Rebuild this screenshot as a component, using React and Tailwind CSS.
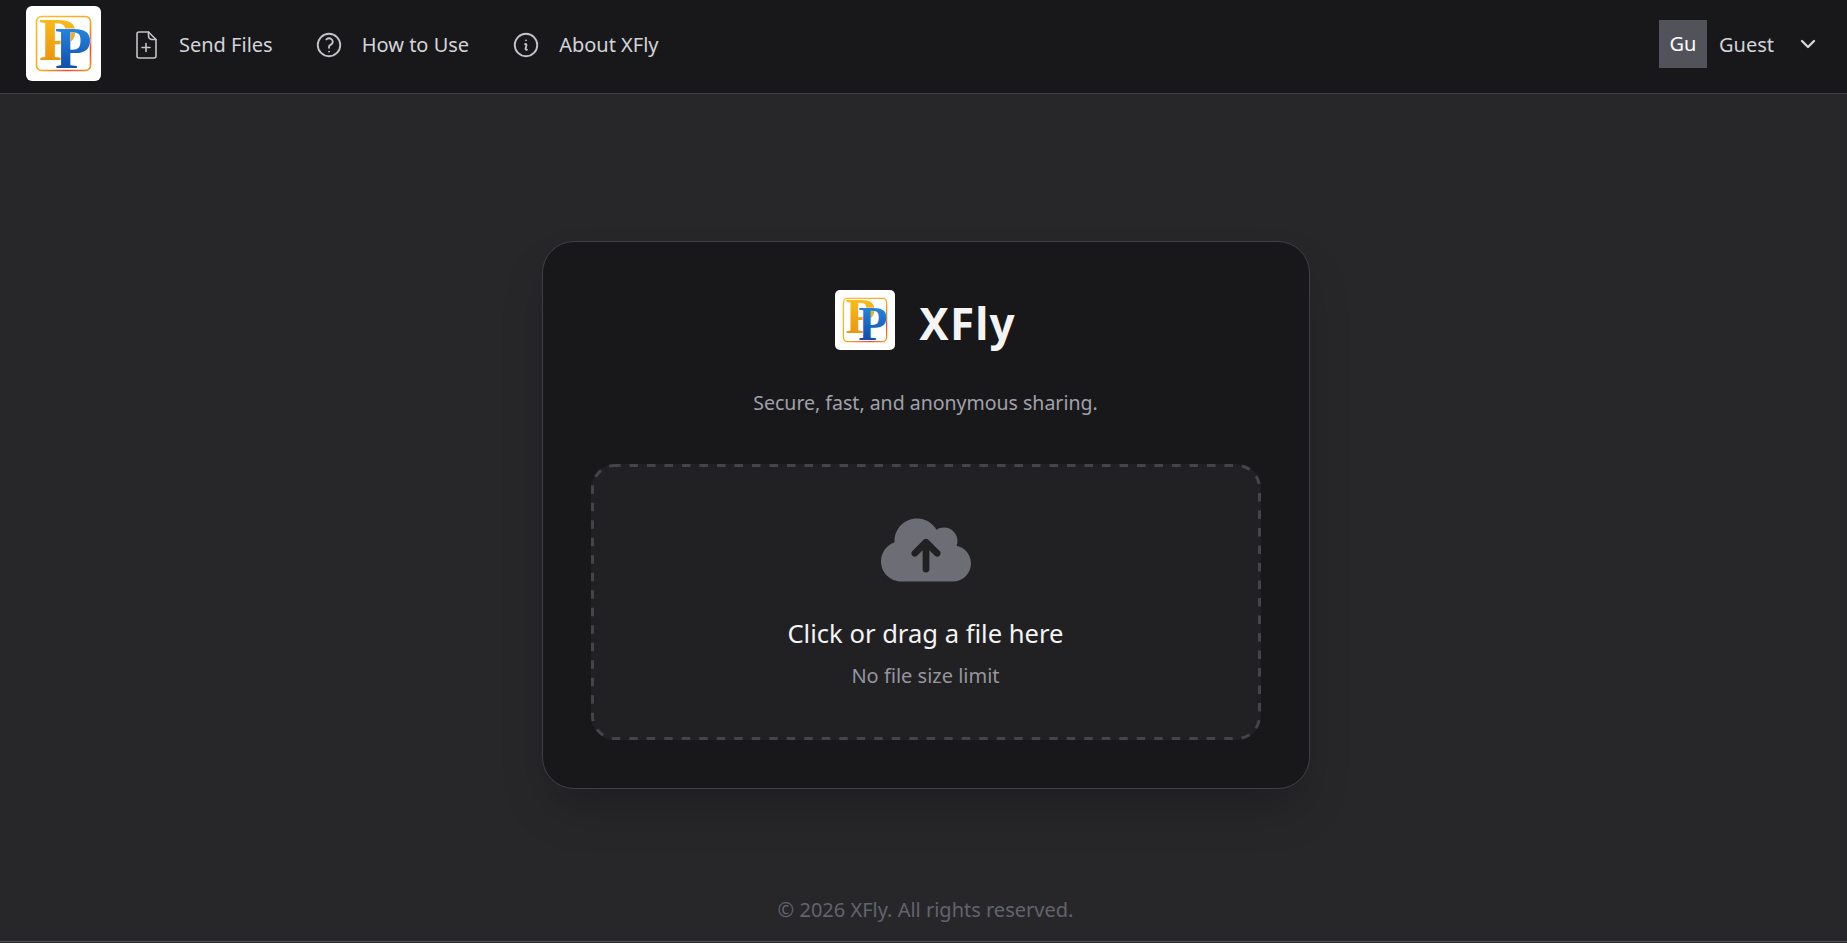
import React from 'react';
import { HiOutlineQuestionMarkCircle, HiOutlineInformationCircle } from 'react-icons/hi2';
import { FaCloudArrowUp } from 'react-icons/fa6';
import { ChevronDown } from 'lucide-react';

// logo: white tile with two overlapping serif P's in a gradient frame
const Logo = ({ id, className }) => (
  <div className={`bg-white shrink-0 ${className}`}>
    <svg viewBox="0 0 75 75" className="w-full h-full">
      <defs>
        <linearGradient id={`${id}-frame`} x1="0" y1="0" x2="1" y2="1">
          <stop offset="0" stopColor="#fbbf24" />
          <stop offset="0.55" stopColor="#f9a61a" />
          <stop offset="0.8" stopColor="#ef4b3a" />
          <stop offset="1" stopColor="#f59e0b" />
        </linearGradient>
        <linearGradient id={`${id}-gold`} x1="0" y1="0" x2="0" y2="1">
          <stop offset="0" stopColor="#fdc81e" />
          <stop offset="1" stopColor="#e8890c" />
        </linearGradient>
        <linearGradient id={`${id}-blue`} x1="0" y1="0" x2="0" y2="1">
          <stop offset="0" stopColor="#2b98ee" />
          <stop offset="1" stopColor="#0a3c9e" />
        </linearGradient>
      </defs>
      <rect x="10.5" y="10.5" width="54" height="54" rx="5" fill="none" stroke={`url(#${id}-frame)`} strokeWidth="1.6" />
      <text x="13" y="54" fontFamily="'Liberation Serif', serif" fontWeight="700" fontSize="62" fill={`url(#${id}-gold)`}>P</text>
      <text x="29" y="62" fontFamily="'Liberation Serif', serif" fontWeight="700" fontSize="60" stroke="#ffffff" strokeWidth="0.8" paintOrder="stroke" fill={`url(#${id}-blue)`}>P</text>
    </svg>
  </div>
);

const FileIcon = ({ className }) => (
  <svg viewBox="0 0 30 30" fill="none" stroke="currentColor" strokeWidth="1.6" strokeLinecap="round" strokeLinejoin="round" className={className}>
    <path d="M8 2h9.5L25 9.5V26a2 2 0 0 1-2 2H8a2 2 0 0 1-2-2V4a2 2 0 0 1 2-2z" />
    <path d="M17.5 2v4a3.5 3.5 0 0 0 3.5 3.5h4" />
    <path d="M15 13.5v8M11 17.5h8" />
  </svg>
);

const NavItem = ({ icon: Icon, label, className = '' }) => (
  <a className={`flex items-center gap-[18px] text-[#d4d4d8] ${className}`}>
    <Icon className="w-[30px] h-[30px] text-[#c4c4c8]" />
    <span className="text-[20px]">{label}</span>
  </a>
);

const App = () => {
  return (
    <div className="min-h-screen flex flex-col bg-[#27272a] font-['Noto_Sans','Open_Sans',sans-serif]">
      <header className="h-[94px] shrink-0 flex items-center justify-between bg-[#18181b] border-b border-[#3f3f46] pl-[26px] pr-[27px] pb-[6px]">
        <div className="flex items-center gap-[30px]">
          <Logo id="nav" className="w-[75px] h-[75px] rounded-[6px]" />
          <div className="flex items-center gap-[41px] mt-[2px]">
            <NavItem icon={FileIcon} label="Send Files" />
            <NavItem icon={HiOutlineQuestionMarkCircle} label="How to Use" />
            <NavItem icon={HiOutlineInformationCircle} label="About XFly" className="ml-[1px]" />
          </div>
        </div>
        <div className="flex items-center">
          <div className="w-[48px] h-[48px] flex items-center justify-center bg-[#52525b] text-white text-[20px]">Gu</div>
          <span className="ml-[12px] mt-[2px] text-[20px] text-[#d4d4d8]">Guest</span>
          <ChevronDown size={24} strokeWidth={2.4} className="ml-[22px] text-[#d4d4d8]" />
        </div>
      </header>

      <main className="flex-1 flex flex-col items-center pt-[147px]">
        <div className="w-[768px] h-[548px] ml-[4px] bg-[#18181b] border border-[#3f3f46] rounded-[32px] p-[48px] shadow-2xl flex flex-col items-center">
          <div className="flex items-center gap-[24px]">
            <Logo id="card" className="w-[60px] h-[60px] rounded-[5px]" />
            <h1 className="text-[44px] leading-[60px] pt-[3px] h-[60px] font-bold text-[#f4f4f5] tracking-wide">XFly</h1>
          </div>
          <p className="mt-[39px] text-[#a1a1aa] text-[19.5px] leading-[28px]">Secure, fast, and anonymous sharing.</p>
          <div className="relative mt-[47px] w-[670px] h-[276px] shrink-0 flex flex-col items-center bg-[#212124] rounded-[24px] pt-[50px]">
            {/* dashed outline, the dash length a css border gives is too short here */}
            <svg viewBox="0 0 670 276" fill="none" className="absolute inset-0 w-full h-full">
              <rect x="1.5" y="1.5" width="667" height="273" rx="22.5" stroke="#44444b" strokeWidth="3" strokeDasharray="8.5 9" strokeDashoffset="3" />
            </svg>
            <FaCloudArrowUp className="w-[90px] h-[72px] text-[#6c6d75]" />
            <p className="mt-[29px] text-[25.6px] text-[#f4f4f5]">Click or drag a file here</p>
            <p className="mt-[8px] text-[20px] text-[#95959e]">No file size limit</p>
          </div>
        </div>
      </main>

      <footer className="h-[61px] mb-[1px] shrink-0 flex justify-center pt-[14px] text-[20px] text-[#63636e] border-b border-[#52525b]">
        <span className="ml-[4px]">© 2026 XFly. All rights reserved.</span>
      </footer>
    </div>
  );
};

export default App;
